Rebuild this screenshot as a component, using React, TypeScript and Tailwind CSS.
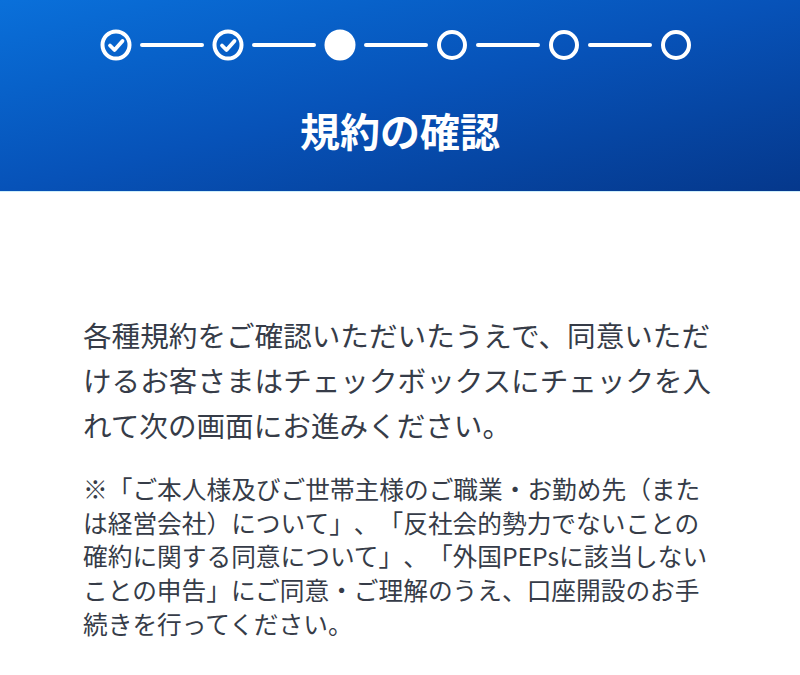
import React from "react";

function CheckStep() {
  return (
    <svg width="32" height="32" viewBox="0 0 32 32" className="shrink-0">
      <circle cx="16" cy="16" r="13.5" fill="none" stroke="white" strokeWidth="4" />
      <polyline points="10,16.5 14.5,21 22.5,12" fill="none" stroke="white" strokeWidth="3.8" strokeLinecap="round" strokeLinejoin="round" />
    </svg>
  );
}

function CurrentStep() {
  return (
    <svg width="32" height="32" viewBox="0 0 32 32" className="shrink-0">
      <circle cx="16" cy="16" r="15.5" fill="white" />
    </svg>
  );
}

function OpenStep() {
  return (
    <svg width="32" height="32" viewBox="0 0 32 32" className="shrink-0">
      <circle cx="16" cy="16" r="13" fill="none" stroke="white" strokeWidth="4" />
    </svg>
  );
}

function Line() {
  return <div className="h-[4px] w-[64px] shrink-0 rounded-full bg-white" />;
}

export default function App() {
  return (
    <div
      className="min-h-[675px] w-[800px] bg-white"
      style={{ fontFamily: '"Noto Sans CJK JP", "Noto Sans", sans-serif' }}
    >
      <header className="h-[192px] border-b border-[#cdeefa] bg-gradient-to-br from-[#0a70da] via-[#0752b8] to-[#05388c] pt-[29px]">
        <div className="flex items-center justify-center gap-[8px] pr-[8px]">
          <CheckStep />
          <Line />
          <CheckStep />
          <Line />
          <CurrentStep />
          <Line />
          <OpenStep />
          <Line />
          <OpenStep />
          <Line />
          <OpenStep />
        </div>
        <h1 className="mt-[45px] text-center text-[40px] font-bold leading-[48px] text-white">
          規約の確認
        </h1>
      </header>
      <main className="pl-[83px] pt-[120px]">
        <div className="w-[634px] text-[#363c48] [text-spacing-trim:space-all]">
          <p className="text-[28.6px] leading-[45px]">
            各種規約をご確認いただいたうえで、同意いただけるお客さまはチェックボックスにチェックを入れて次の画面にお進みください。
          </p>
          <p className="mt-[25px] text-[24.7px] leading-[33.7px]">
            ※「ご本人様及びご世帯主様のご職業・お勤め先（または経営会社）について」、「反社会的勢力でないことの確約に関する同意について」、「外国PEPsに該当しないことの申告」にご同意・ご理解のうえ、口座開設のお手続きを行ってください。
          </p>
        </div>
      </main>
    </div>
  );
}
